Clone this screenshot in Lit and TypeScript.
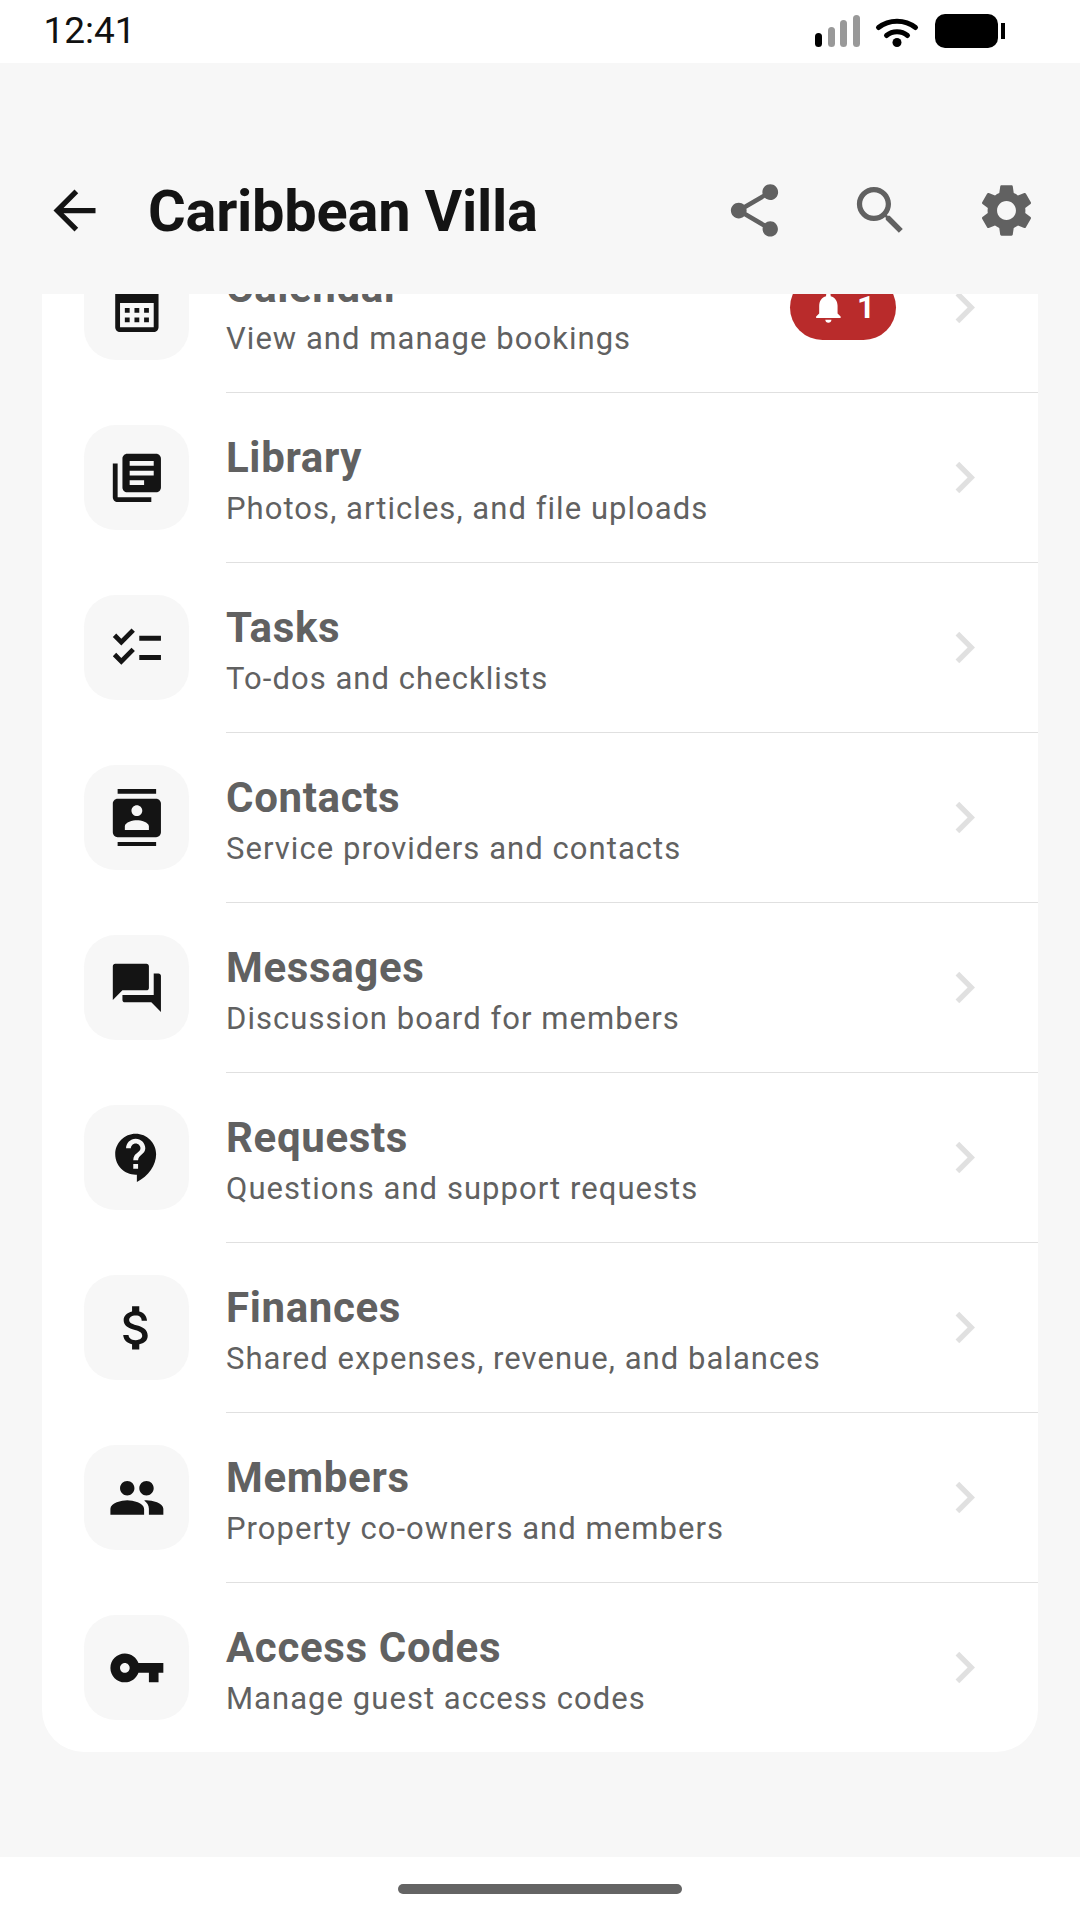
import { LitElement, html, css, svg } from "lit";
import { customElement } from "lit/decorators.js";

const ICONS: Record<string, string> = {
  back: "M20 11H7.83l5.59-5.59L12 4l-8 8 8 8 1.41-1.41L7.83 13H20v-2z",
  share: "M18 16.08c-.76 0-1.44.3-1.96.77L8.91 12.7c.05-.23.09-.46.09-.7s-.04-.47-.09-.7l7.05-4.11c.54.5 1.25.81 2.04.81 1.66 0 3-1.34 3-3s-1.34-3-3-3-3 1.34-3 3c0 .24.04.47.09.7L8.04 9.81C7.5 9.31 6.79 9 6 9c-1.66 0-3 1.34-3 3s1.34 3 3 3c.79 0 1.5-.31 2.04-.81l7.12 4.16c-.05.21-.08.43-.08.65 0 1.61 1.31 2.92 2.92 2.92 1.61 0 2.92-1.31 2.92-2.92s-1.31-2.92-2.92-2.92z",
  search: "M15.5 14h-.79l-.28-.27C15.41 12.59 16 11.11 16 9.5 16 5.91 13.09 3 9.5 3S3 5.91 3 9.5 5.91 16 9.5 16c1.61 0 3.09-.59 4.23-1.57l.27.28v.79l5 4.99L20.49 19l-4.99-5zm-6 0C7.01 14 5 11.99 5 9.5S7.01 5 9.5 5 14 7.01 14 9.5 11.99 14 9.5 14z",
  settings: "M19.14 12.94c.04-.3.06-.61.06-.94 0-.32-.02-.64-.07-.94l2.03-1.58c.18-.14.23-.41.12-.61l-1.92-3.32c-.12-.22-.37-.29-.59-.22l-2.39.96c-.5-.38-1.03-.7-1.62-.94l-.36-2.54c-.04-.24-.24-.41-.48-.41h-3.84c-.24 0-.43.17-.47.41l-.36 2.54c-.59.24-1.13.57-1.62.94l-2.39-.96c-.22-.08-.47 0-.59.22L2.74 8.87c-.12.21-.08.47.12.61l2.03 1.58c-.05.3-.09.63-.09.94s.02.64.07.94l-2.03 1.58c-.18.14-.23.41-.12.61l1.92 3.32c.12.22.37.29.59.22l2.39-.96c.5.38 1.03.7 1.62.94l.36 2.54c.05.24.24.41.48.41h3.84c.24 0 .44-.17.47-.41l.36-2.54c.59-.24 1.13-.56 1.62-.94l2.39.96c.22.08.47 0 .59-.22l1.92-3.32c.12-.22.07-.47-.12-.61l-2.01-1.58zM12 15.6c-1.98 0-3.6-1.62-3.6-3.6s1.62-3.6 3.6-3.6 3.6 1.62 3.6 3.6-1.62 3.6-3.6 3.6z",
  calendar: "M19 4h-1V2h-2v2H8V2H6v2H5c-1.1 0-2 .9-2 2v14c0 1.1.9 2 2 2h14c1.1 0 2-.9 2-2V6c0-1.1-.9-2-2-2zm0 16H5V10h14v10zM9 14H7v-2h2v2zm4 0h-2v-2h2v2zm4 0h-2v-2h2v2zm-8 4H7v-2h2v2zm4 0h-2v-2h2v2zm4 0h-2v-2h2v2z",
  library: "M4 6H2v14c0 1.1.9 2 2 2h14v-2H4V6zm16-4H8c-1.1 0-2 .9-2 2v12c0 1.1.9 2 2 2h12c1.1 0 2-.9 2-2V4c0-1.1-.9-2-2-2zm-1 9H9V9h10v2zm-4 4H9v-2h6v2zm4-8H9V5h10v2z",
  tasks: "M22 7h-9v2h9V7zm0 8h-9v2h9v-2zM5.54 11L2 7.46l1.41-1.41 2.12 2.12 4.24-4.24 1.41 1.41L5.54 11zm0 8L2 15.46l1.41-1.41 2.12 2.12 4.24-4.24 1.41 1.41L5.54 19z",
  contacts: "M20 0H4v2h16V0zM4 24h16v-2H4v2zM20 4H4c-1.1 0-2 .9-2 2v12c0 1.1.9 2 2 2h16c1.1 0 2-.9 2-2V6c0-1.1-.9-2-2-2zm-8 2.75c1.24 0 2.25 1.01 2.25 2.25s-1.01 2.25-2.25 2.25S9.75 10.24 9.75 9 10.76 6.75 12 6.75zM17 17H7v-1.5c0-1.67 3.33-2.5 5-2.5s5 .83 5 2.5V17z",
  forum: "M21 6h-2v9H6v2c0 .55.45 1 1 1h11l4 4V7c0-.55-.45-1-1-1zm-4 6V3c0-.55-.45-1-1-1H3c-.55 0-1 .45-1 1v14l4-4h10c.55 0 1-.45 1-1z",
  support: "M11.5 2C6.81 2 3 5.81 3 10.5S6.81 19 11.5 19h.5v3c4.86-2.34 8-7 8-11.5C20 5.81 16.19 2 11.5 2zm1 14.5h-2v-2h2v2zm0-3.5h-2c0-3.25 3-3 3-5 0-1.1-.9-2-2-2s-2 .9-2 2h-2c0-2.21 1.79-4 4-4s4 1.79 4 4c0 2.5-3 2.75-3 5z",
  money: "M11.8 10.9c-2.27-.59-3-1.2-3-2.15 0-1.09 1.01-1.85 2.7-1.85 1.78 0 2.44.85 2.5 2.1h2.21c-.07-1.72-1.12-3.3-3.21-3.81V3h-3v2.16c-1.94.42-3.5 1.68-3.5 3.61 0 2.31 1.91 3.46 4.7 4.13 2.5.6 3 1.48 3 2.41 0 .69-.49 1.79-2.7 1.79-2.06 0-2.87-.92-2.98-2.1h-2.2c.12 2.19 1.76 3.42 3.68 3.83V21h3v-2.15c1.95-.37 3.5-1.5 3.5-3.55 0-2.84-2.43-3.81-4.7-4.4z",
  people: "M16 11c1.66 0 2.99-1.34 2.99-3S17.66 5 16 5c-1.66 0-3 1.34-3 3s1.34 3 3 3zm-8 0c1.66 0 2.99-1.34 2.99-3S9.66 5 8 5C6.34 5 5 6.34 5 8s1.34 3 3 3zm0 2c-2.33 0-7 1.17-7 3.5V19h14v-2.5c0-2.33-4.67-3.5-7-3.5zm8 0c-.29 0-.62.02-.97.05 1.16.84 1.97 1.97 1.97 3.45V19h6v-2.5c0-2.33-4.67-3.5-7-3.5z",
  key: "M12.65 10C11.83 7.67 9.61 6 7 6c-3.31 0-6 2.69-6 6s2.69 6 6 6c2.61 0 4.83-1.67 5.65-4H17v4h4v-4h2v-4H12.65zM7 14c-1.1 0-2-.9-2-2s.9-2 2-2 2 .9 2 2-.9 2-2 2z",
  chevron: "M10 6L8.59 7.41 13.17 12l-4.58 4.59L10 18l6-6z",
  bell: "M12 22c1.1 0 2-.9 2-2h-4c0 1.1.89 2 2 2zm6-6v-5c0-3.07-1.64-5.64-4.5-6.32V4c0-.83-.67-1.5-1.5-1.5s-1.5.67-1.5 1.5v.68C7.63 5.36 6 7.92 6 11v5l-2 2v1h16v-1l-2-2z",
};

const icon = (name: string, cls: string) =>
  html`<svg class=${cls} viewBox="0 0 24 24" fill="currentColor">${svg`<path d=${ICONS[name]}></path>`}</svg>`;

const ROWS = [
  { icon: "calendar", title: "Calendar", sub: "View and manage bookings", badge: 1 },
  { icon: "library", title: "Library", sub: "Photos, articles, and file uploads" },
  { icon: "tasks", title: "Tasks", sub: "To-dos and checklists" },
  { icon: "contacts", title: "Contacts", sub: "Service providers and contacts" },
  { icon: "forum", title: "Messages", sub: "Discussion board for members" },
  { icon: "support", title: "Requests", sub: "Questions and support requests" },
  { icon: "money", title: "Finances", sub: "Shared expenses, revenue, and balances" },
  { icon: "people", title: "Members", sub: "Property co-owners and members" },
  { icon: "key", title: "Access Codes", sub: "Manage guest access codes" },
];

@customElement("app-root")
export class AppRoot extends LitElement {
  static styles = css`
    :host {
      display: flex;
      flex-direction: column;
      width: 1080px;
      height: 1920px;
      background: #f7f7f7;
      font-family: Roboto, sans-serif;
      overflow: hidden;
    }
    .status {
      flex: none;
      height: 63px;
      background: #fff;
      display: flex;
      align-items: center;
      justify-content: space-between;
      padding: 0 75px 0 43.5px;
      box-sizing: border-box;
    }
    .time {
      font-size: 37px;
      color: #111;
      line-height: 60px;
      margin-bottom: 2px;
    }
    .status-icons {
      display: block;
      width: 190px;
      height: 63px;
    }
    .header {
      flex: none;
      height: 231px;
      box-sizing: border-box;
      padding: 64px 42px 0 43px;
      display: flex;
      align-items: center;
    }
    .hicon {
      flex: none;
      width: 63px;
      height: 63px;
      color: #616161;
    }
    .hicon.back {
      color: #141414;
    }
    .hicon + .hicon {
      margin-left: 63px;
    }
    h1 {
      flex: 1;
      margin: 0 0 0 42px;
      font-size: 57.75px;
      font-weight: 700;
      letter-spacing: -0.25px;
      color: #141414;
    }
    .scroll {
      flex: 1;
      min-height: 0;
      overflow: hidden;
      padding: 0 42px;
    }
    .card {
      margin-top: -71px;
      background: #fff;
      border-radius: 42px;
    }
    .row {
      height: 170px;
      display: flex;
      padding-left: 42px;
      gap: 37px;
    }
    .row:last-child {
      height: 169px;
    }
    .tile {
      flex: none;
      align-self: flex-start;
      width: 105px;
      height: 105px;
      margin-top: 32px;
      border-radius: 31.5px;
      background: #f7f7f7;
      display: flex;
      align-items: center;
      justify-content: center;
      color: #141414;
    }
    .tile-icon {
      width: 57.75px;
      height: 57.75px;
    }
    .body {
      flex: 1;
      min-width: 0;
      display: flex;
      align-items: center;
      padding-right: 42px;
      border-bottom: 1px solid #e0e0e0;
    }
    .row:last-child .body {
      border-bottom: 0;
    }
    .text {
      flex: 1;
      min-width: 0;
      padding-top: 4px;
    }
    .title {
      font-size: 42px;
      font-weight: 700;
      line-height: 55px;
      letter-spacing: 0.65px;
      color: #616161;
    }
    .sub {
      margin-top: 3px;
      font-size: 31px;
      line-height: 42px;
      letter-spacing: 1.05px;
      color: #616161;
    }
    .badge {
      flex: none;
      height: 65px;
      box-sizing: border-box;
      padding: 0 21px 0 20px;
      margin-right: 37px;
      border-radius: 32.5px;
      background: #b92b2b;
      color: #fff;
      display: flex;
      align-items: center;
      gap: 10.5px;
      font-size: 31.5px;
      font-weight: 700;
    }
    .bell {
      width: 36.75px;
      height: 36.75px;
    }
    .chev {
      flex: none;
      width: 63px;
      height: 63px;
      color: #e0e0e0;
    }
    .nav {
      flex: none;
      height: 63px;
      background: #fff;
      display: flex;
      justify-content: center;
      padding-top: 27px;
      box-sizing: border-box;
    }
    .home {
      width: 284px;
      height: 10px;
      border-radius: 5px;
      background: #646464;
    }
  `;

  render() {
    return html`
      <div class="status">
        <span class="time">12:41</span>
        <svg class="status-icons" viewBox="815 0 190 63">
          <rect x="815" y="33" width="7" height="14" rx="3.5" fill="#000"></rect>
          <rect x="828" y="27" width="7" height="20" rx="3.5" fill="#999"></rect>
          <rect x="840" y="20" width="7" height="27" rx="3.5" fill="#999"></rect>
          <rect x="853" y="15" width="7" height="32" rx="3.5" fill="#999"></rect>
          <path d="M878.5 27.5c10.5-8.5 26.5-8.5 37 0" fill="none" stroke="#000" stroke-width="5" stroke-linecap="round"></path>
          <path d="M886.5 35.5c6-5 15-5 21 0" fill="none" stroke="#000" stroke-width="5" stroke-linecap="round"></path>
          <circle cx="897" cy="42.5" r="4.5" fill="#000"></circle>
          <rect x="935" y="14" width="63" height="34" rx="10" fill="#000"></rect>
          <rect x="1001" y="23" width="4" height="16" fill="#000"></rect>
        </svg>
      </div>
      <div class="header">
        ${icon("back", "hicon back")}
        <h1>Caribbean Villa</h1>
        ${icon("share", "hicon")}${icon("search", "hicon")}${icon("settings", "hicon")}
      </div>
      <div class="scroll">
        <div class="card">
          ${ROWS.map(
            (r) => html`
              <div class="row">
                <div class="tile">${icon(r.icon, "tile-icon")}</div>
                <div class="body">
                  <div class="text">
                    <div class="title">${r.title}</div>
                    <div class="sub">${r.sub}</div>
                  </div>
                  ${r.badge
                    ? html`<div class="badge">${icon("bell", "bell")}<span>${r.badge}</span></div>`
                    : ""}
                  ${icon("chevron", "chev")}
                </div>
              </div>
            `
          )}
        </div>
      </div>
      <div class="nav"><div class="home"></div></div>
    `;
  }
}
